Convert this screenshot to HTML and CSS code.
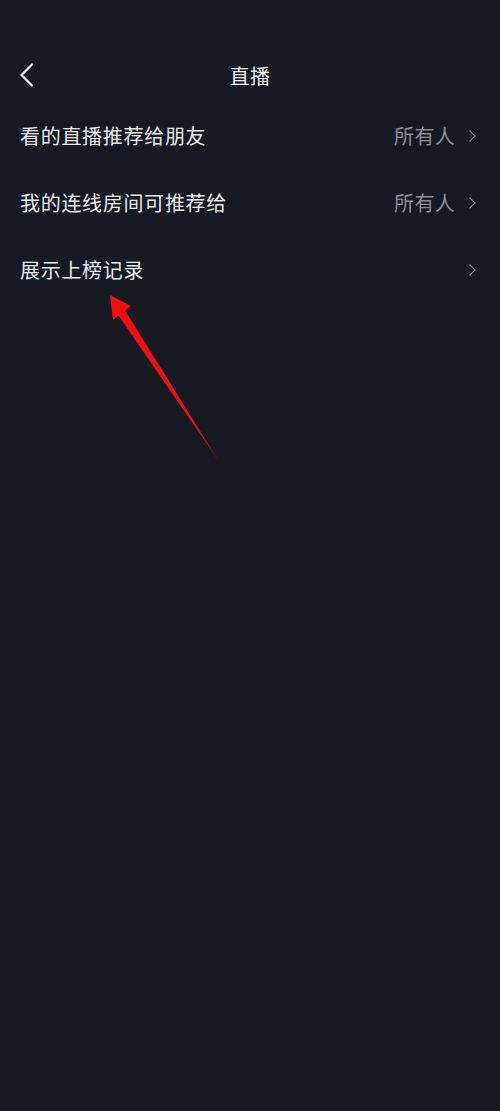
FILE: index.html
```html
<!DOCTYPE html>
<html lang="zh-CN">
<head>
  <meta charset="UTF-8">
  <meta name="viewport" content="width=device-width, initial-scale=1.0">
  <title>直播</title>
  <link rel="stylesheet" href="styles.css">
</head>
<body>

  <div class="page">
    <header class="nav">
      <button class="back" aria-label="返回">
        <svg width="16" height="24" viewBox="0 0 16 24">
          <path d="M13 1.5 L2.5 12 L13 22.5" fill="none" stroke="#f2f2f4" stroke-width="2.2" stroke-linecap="round" stroke-linejoin="round"/>
        </svg>
      </button>
      <h1 class="title">直播</h1>
    </header>

    <ul class="list">
      <li class="row">
        <span class="label">看的直播推荐给朋友</span>
        <span class="value">所有人</span>
        <span class="chevron"></span>
      </li>
      <li class="row">
        <span class="label">我的连线房间可推荐给</span>
        <span class="value">所有人</span>
        <span class="chevron"></span>
      </li>
      <li class="row">
        <span class="label">展示上榜记录</span>
        <span class="value"></span>
        <span class="chevron"></span>
      </li>
    </ul>

    <!-- red pointer drawn over the list -->
    <svg class="pointer" width="500" height="500" viewBox="0 0 500 500">
      <defs>
        <linearGradient id="tail" x1="110" y1="295" x2="220" y2="462" gradientUnits="userSpaceOnUse">
          <stop offset="0" stop-color="#f20d0d"/>
          <stop offset="0.75" stop-color="#e8101a"/>
          <stop offset="1" stop-color="#8a1020"/>
        </linearGradient>
      </defs>
      <polygon points="110,295 131,306 125,310.5 220,463 118.5,315.5 113,320" fill="url(#tail)"/>
    </svg>
  </div>

</body>
</html>
```

FILE: styles.css
```css
body {
  margin: 0;
  background: #171923;
  font-family: "Noto Sans CJK SC", "Noto Sans", sans-serif;
  color: #ececee;
}
.page {
  position: relative;
  width: 500px;
  height: 1111px;
  padding-top: 52px;
  box-sizing: border-box;
}
.nav {
  position: relative;
  height: 46px;
  display: flex;
  align-items: center;
  justify-content: center;
}
.back {
  position: absolute;
  left: 19px;
  top: 11px;
  padding: 0;
  border: none;
  background: none;
  display: flex;
}
.title {
  margin: 0;
  font-size: 20px;
  font-weight: 400;
  color: #f0f0f2;
  letter-spacing: 0.5px;
}
.list {
  list-style: none;
  margin: 0;
  padding: 4px 0 0;
}
.row {
  height: 67px;
  display: flex;
  align-items: center;
  padding: 0 23px 0 20px;
}
.label {
  flex: 1;
  font-size: 20px;
  letter-spacing: 0.7px;
  color: #e9e9ec;
}
.value {
  font-size: 20px;
  letter-spacing: 0.3px;
  color: #8b8c94;
  margin-right: 11px;
}
.chevron {
  width: 7px;
  height: 7px;
  border-top: 1.8px solid #8b8c94;
  border-right: 1.8px solid #8b8c94;
  transform: rotate(45deg);
  margin-right: 3px;
}
.pointer {
  position: absolute;
  left: 0;
  top: 0;
}
```
